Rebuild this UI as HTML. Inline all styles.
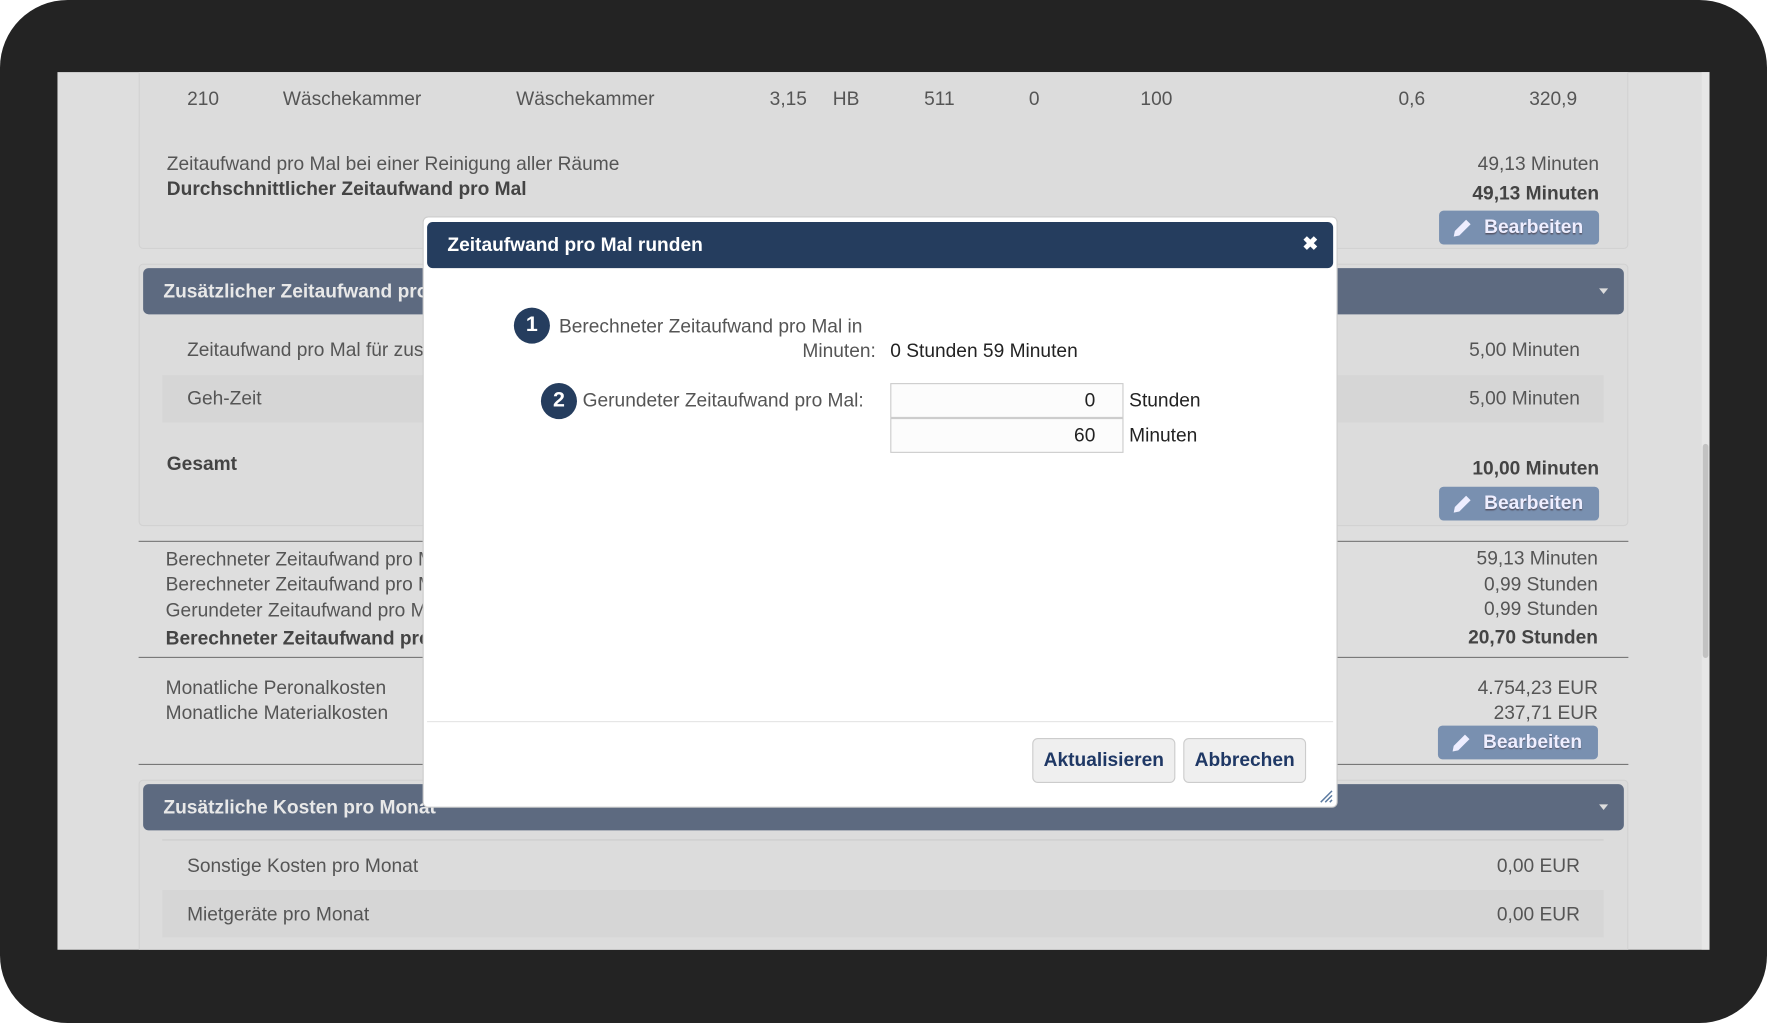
<!DOCTYPE html>
<html><head><meta charset="utf-8"><style>
*{margin:0;padding:0;box-sizing:border-box}
html,body{width:1767px;height:1023px;overflow:hidden;background:#fff}
#w{position:absolute;left:0;top:0;width:1568px;height:908px;transform:scale(1.12691,1.12665);transform-origin:0 0;font-family:"Liberation Sans",sans-serif;}
#frame{position:absolute;left:0;top:0;width:1568px;height:908px;background:#232323;border-radius:60px}
#scr{position:absolute;left:51px;top:64px;width:1466px;height:779px;background:#dedede;overflow:hidden}
.a{position:absolute;white-space:nowrap;color:#555;font-size:17px}
.b{font-weight:bold;color:#444}
.card{position:absolute;border:1px solid #d2d2d2;border-radius:4px;background:#dcdcdc}
.hdr{position:absolute;background:#5d6a80;border-radius:5px;color:#e8e8e8;font-weight:bold;font-size:17px;padding:11px 18px;height:41px}
.hdr:after{content:"";position:absolute;right:14px;top:18px;border:4px solid transparent;border-top:5px solid #ddd}
.btn{position:absolute;background:#7990b0;border-radius:4px;color:#eef;font-weight:bold;font-size:17px;height:30px;width:142px;padding:5px 0 0 40px;text-shadow:0 1px 1px #556}
.btn svg{position:absolute;left:11px;top:6px}
.row{position:absolute;background:#d6d6d6}
.line{position:absolute;height:1px;background:#777}
</style></head><body><div id="w">
<div id="frame"></div>
<div id="scr">
<div style="position:absolute;right:0;top:0;width:7px;height:779px;background:#e6e6e6"></div>
<div style="position:absolute;right:1px;top:330px;width:5px;height:190px;background:#c2c2c2;border-radius:3px"></div>
<div class="card" style="left:72px;top:-5px;width:1322px;height:162px"></div>
<div class="a" style="left:115px;top:14px">210</div><div class="a" style="left:200px;top:14px">Wäschekammer</div><div class="a" style="left:407px;top:14px">Wäschekammer</div><div class="a" style="left:632px;top:14px">3,15</div><div class="a" style="left:688px;top:14px">HB</div><div class="a" style="left:769px;top:14px">511</div><div class="a" style="left:862px;top:14px">0</div><div class="a" style="left:961px;top:14px">100</div><div class="a" style="left:1190px;top:14px">0,6</div><div class="a" style="left:1306px;top:14px">320,9</div>
<div class="a" style="left:97px;top:72px">Zeitaufwand pro Mal bei einer Reinigung aller Räume</div>
<div class="a b" style="left:97px;top:94px">Durchschnittlicher Zeitaufwand pro Mal</div>
<div class="a" style="right:98px;top:72px">49,13 Minuten</div>
<div class="a b" style="right:98px;top:98px">49,13 Minuten</div>
<div class="btn" style="left:1226px;top:123px"><svg width="20" height="18" viewBox="0 0 20 18"><path d="M2 17l1-5L13 2l4 4L7 16z" fill="#eef"/></svg>Bearbeiten</div>

<div class="card" style="left:72px;top:170px;width:1322px;height:233px"></div>
<div class="hdr" style="left:76px;top:174px;width:1314px">Zusätzlicher Zeitaufwand pro Mal</div>
<div class="a" style="left:115px;top:237px">Zeitaufwand pro Mal für zusätzliche Tätigkeiten</div><div class="a" style="right:115px;top:237px">5,00 Minuten</div>
<div class="row" style="left:93px;top:269px;width:1279px;height:42px"></div>
<div class="a" style="left:115px;top:280px">Geh-Zeit</div><div class="a" style="right:115px;top:280px">5,00 Minuten</div>
<div class="a b" style="left:97px;top:338px">Gesamt</div>
<div class="a b" style="right:98px;top:342px">10,00 Minuten</div>
<div class="btn" style="left:1226px;top:368px"><svg width="20" height="18" viewBox="0 0 20 18"><path d="M2 17l1-5L13 2l4 4L7 16z" fill="#eef"/></svg>Bearbeiten</div>

<div class="line" style="left:72px;top:416px;width:1322px"></div>
<div class="a" style="left:96px;top:423px">Berechneter Zeitaufwand pro Mal in Minuten</div><div class="a" style="right:99px;top:422px">59,13 Minuten</div>
<div class="a" style="left:96px;top:445px">Berechneter Zeitaufwand pro Mal in Stunden</div><div class="a" style="right:99px;top:445px">0,99 Stunden</div>
<div class="a" style="left:96px;top:468px">Gerundeter Zeitaufwand pro Mal</div><div class="a" style="right:99px;top:467px">0,99 Stunden</div>
<div class="a b" style="left:96px;top:493px">Berechneter Zeitaufwand pro Monat</div><div class="a b" style="right:99px;top:492px">20,70 Stunden</div>
<div class="line" style="left:72px;top:519px;width:1322px"></div>
<div class="a" style="left:96px;top:537px">Monatliche Peronalkosten</div><div class="a" style="right:99px;top:537px">4.754,23 EUR</div>
<div class="a" style="left:96px;top:559px">Monatliche Materialkosten</div><div class="a" style="right:99px;top:559px">237,71 EUR</div>
<div class="btn" style="left:1225px;top:580px"><svg width="20" height="18" viewBox="0 0 20 18"><path d="M2 17l1-5L13 2l4 4L7 16z" fill="#eef"/></svg>Bearbeiten</div>
<div class="line" style="left:72px;top:614px;width:1322px"></div>

<div class="card" style="left:72px;top:628px;width:1322px;height:160px"></div>
<div class="hdr" style="left:76px;top:632px;width:1314px">Zusätzliche Kosten pro Monat</div>
<div style="position:absolute;left:93px;top:681px;width:1279px;height:1px;background:#ccc"></div>
<div class="a" style="left:115px;top:695px">Sonstige Kosten pro Monat</div><div class="a" style="right:115px;top:695px">0,00 EUR</div>
<div class="row" style="left:93px;top:726px;width:1279px;height:42px"></div>
<div class="a" style="left:115px;top:738px">Mietgeräte pro Monat</div><div class="a" style="right:115px;top:738px">0,00 EUR</div>
</div>

<div style="position:absolute;left:375px;top:192px;width:812px;height:525px;background:#fff;border-radius:5px;border:1px solid #ccc">
<div style="position:absolute;left:3px;top:4px;width:804px;height:41px;background:#253d5e;border-radius:5px;color:#fff;font-weight:bold;font-size:17px;padding:11px 18px">Zeitaufwand pro Mal runden<span style="position:absolute;right:13px;top:10px;font-size:17px">✖</span></div>
<div style="position:absolute;left:80px;top:80px;width:32px;height:32px;border-radius:50%;background:#253d5e;color:#fff;font-weight:bold;font-size:19px;text-align:center;line-height:32px">1</div>
<div class="a" style="left:120px;top:87px;color:#555">Berechneter Zeitaufwand pro Mal in</div>
<div class="a" style="left:336px;top:109px;color:#555">Minuten:</div>
<div class="a" style="left:414px;top:109px;color:#222">0 Stunden 59 Minuten</div>
<div style="position:absolute;left:104px;top:147px;width:32px;height:32px;border-radius:50%;background:#253d5e;color:#fff;font-weight:bold;font-size:19px;text-align:center;line-height:32px">2</div>
<div class="a" style="left:141px;top:153px;color:#555">Gerundeter Zeitaufwand pro Mal:</div>
<div style="position:absolute;left:414px;top:147px;width:207px;height:31px;border:1px solid #ccc;background:#fcfcfc;text-align:right;padding:5px 24px 0 0;font-size:17px;color:#222">0</div>
<div style="position:absolute;left:414px;top:178px;width:207px;height:31px;border:1px solid #ccc;background:#fcfcfc;text-align:right;padding:5px 24px 0 0;font-size:17px;color:#222">60</div>
<div class="a" style="left:626px;top:153px;color:#222">Stunden</div>
<div class="a" style="left:626px;top:184px;color:#222">Minuten</div>
<div style="position:absolute;left:3px;top:447px;width:804px;height:1px;background:#e4e4e4"></div>
<div style="position:absolute;left:540px;top:462px;width:127px;height:40px;border:1px solid #ccc;border-radius:5px;background:#efefef;color:#1f3865;font-weight:bold;font-size:17px;text-align:center;line-height:38px">Aktualisieren</div>
<div style="position:absolute;left:674px;top:462px;width:109px;height:40px;border:1px solid #ccc;border-radius:5px;background:#efefef;color:#1f3865;font-weight:bold;font-size:17px;text-align:center;line-height:38px">Abbrechen</div>
<svg style="position:absolute;right:3px;bottom:3px" width="12" height="12"><path d="M1 11L11 1M5 11L11 5M9 11L11 9" stroke="#5b7aa0" stroke-width="1.3"/></svg>
</div>
</div></body></html>
